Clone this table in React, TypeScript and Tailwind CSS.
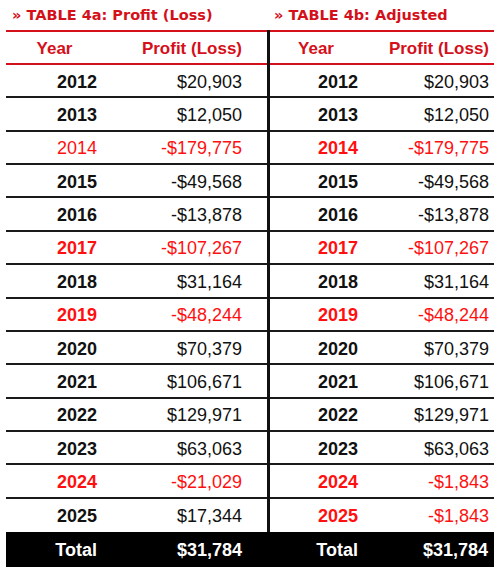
import React from 'react';

type Row = { year: string; value: string; red?: boolean; bold?: boolean };

const left: Row[] = [
  { year: '2012', value: '$20,903', bold: true },
  { year: '2013', value: '$12,050', bold: true },
  { year: '2014', value: '-$179,775', red: true, bold: false },
  { year: '2015', value: '-$49,568', bold: true },
  { year: '2016', value: '-$13,878', bold: true },
  { year: '2017', value: '-$107,267', red: true, bold: true },
  { year: '2018', value: '$31,164', bold: true },
  { year: '2019', value: '-$48,244', red: true, bold: true },
  { year: '2020', value: '$70,379', bold: true },
  { year: '2021', value: '$106,671', bold: true },
  { year: '2022', value: '$129,971', bold: true },
  { year: '2023', value: '$63,063', bold: true },
  { year: '2024', value: '-$21,029', red: true, bold: true },
  { year: '2025', value: '$17,344', bold: true },
];

const right: Row[] = [
  { year: '2012', value: '$20,903', bold: true },
  { year: '2013', value: '$12,050', bold: true },
  { year: '2014', value: '-$179,775', red: true, bold: true },
  { year: '2015', value: '-$49,568', bold: true },
  { year: '2016', value: '-$13,878', bold: true },
  { year: '2017', value: '-$107,267', red: true, bold: true },
  { year: '2018', value: '$31,164', bold: true },
  { year: '2019', value: '-$48,244', red: true, bold: true },
  { year: '2020', value: '$70,379', bold: true },
  { year: '2021', value: '$106,671', bold: true },
  { year: '2022', value: '$129,971', bold: true },
  { year: '2023', value: '$63,063', bold: true },
  { year: '2024', value: '-$1,843', red: true, bold: true },
  { year: '2025', value: '-$1,843', red: true, bold: true },
];

// one side of the table: header + rows
function Side({ rows, yearW, headW, padR }: { rows: Row[]; yearW: string; headW: string; padR: string }) {
  return (
    <div className="flex flex-col">
      <div className="flex h-[35px] items-center border-y-2 border-[#d4101a] pt-[2px] text-[17px] font-bold text-[#d4101a]">
        <div className={`${headW} text-center`}>Year</div>
        <div className={`flex-1 text-right ${padR}`}>Profit (Loss)</div>
      </div>
      {rows.map((r, i) => (
        <div
          key={r.year}
          className={`flex h-[33.36px] items-center pt-[3px] text-[18px] ${i < rows.length - 1 ? 'border-b-2 border-[#1a1a1a]' : ''} ${r.red ? 'text-[#ff1010]' : 'text-[#111]'}`}
        >
          <div className={`${yearW} text-right ${r.bold ? 'font-bold' : ''}`}>{r.year}</div>
          <div className={`flex-1 text-right ${padR}`}>{r.value}</div>
        </div>
      ))}
    </div>
  );
}

export default function App() {
  return (
    <div className="h-[575px] w-[500px] bg-white px-[6px] font-['Liberation_Sans',Arial,sans-serif]">
      <div className="flex h-[30px] items-center pt-[2px] font-['DejaVu_Sans',Verdana,sans-serif] text-[14.5px] font-bold text-[#d4101a]">
        <div className="w-[262px] pl-[6px]">» TABLE 4a: Profit (Loss)</div>
        <div className="pl-[6px]">» TABLE 4b: Adjusted</div>
      </div>
      <div className="flex">
        <div className="w-[261px] border-r-[3px] border-[#111] box-content">
          <Side rows={left} yearW="w-[91px]" headW="w-[97px]" padR="pr-[25px]" />
        </div>
        <div className="flex-1">
          <Side rows={right} yearW="w-[88px]" headW="w-[92px]" padR="pr-[5px]" />
        </div>
      </div>
      <div className="flex h-[35px] items-center bg-black pt-[2px] text-[18px] font-bold text-white">
        <div className="w-[91px] text-right">Total</div>
        <div className="w-[170px] pr-[25px] text-right">$31,784</div>
        <div className="w-[91px] text-right">Total</div>
        <div className="flex-1 pr-[6px] text-right">$31,784</div>
      </div>
    </div>
  );
}
